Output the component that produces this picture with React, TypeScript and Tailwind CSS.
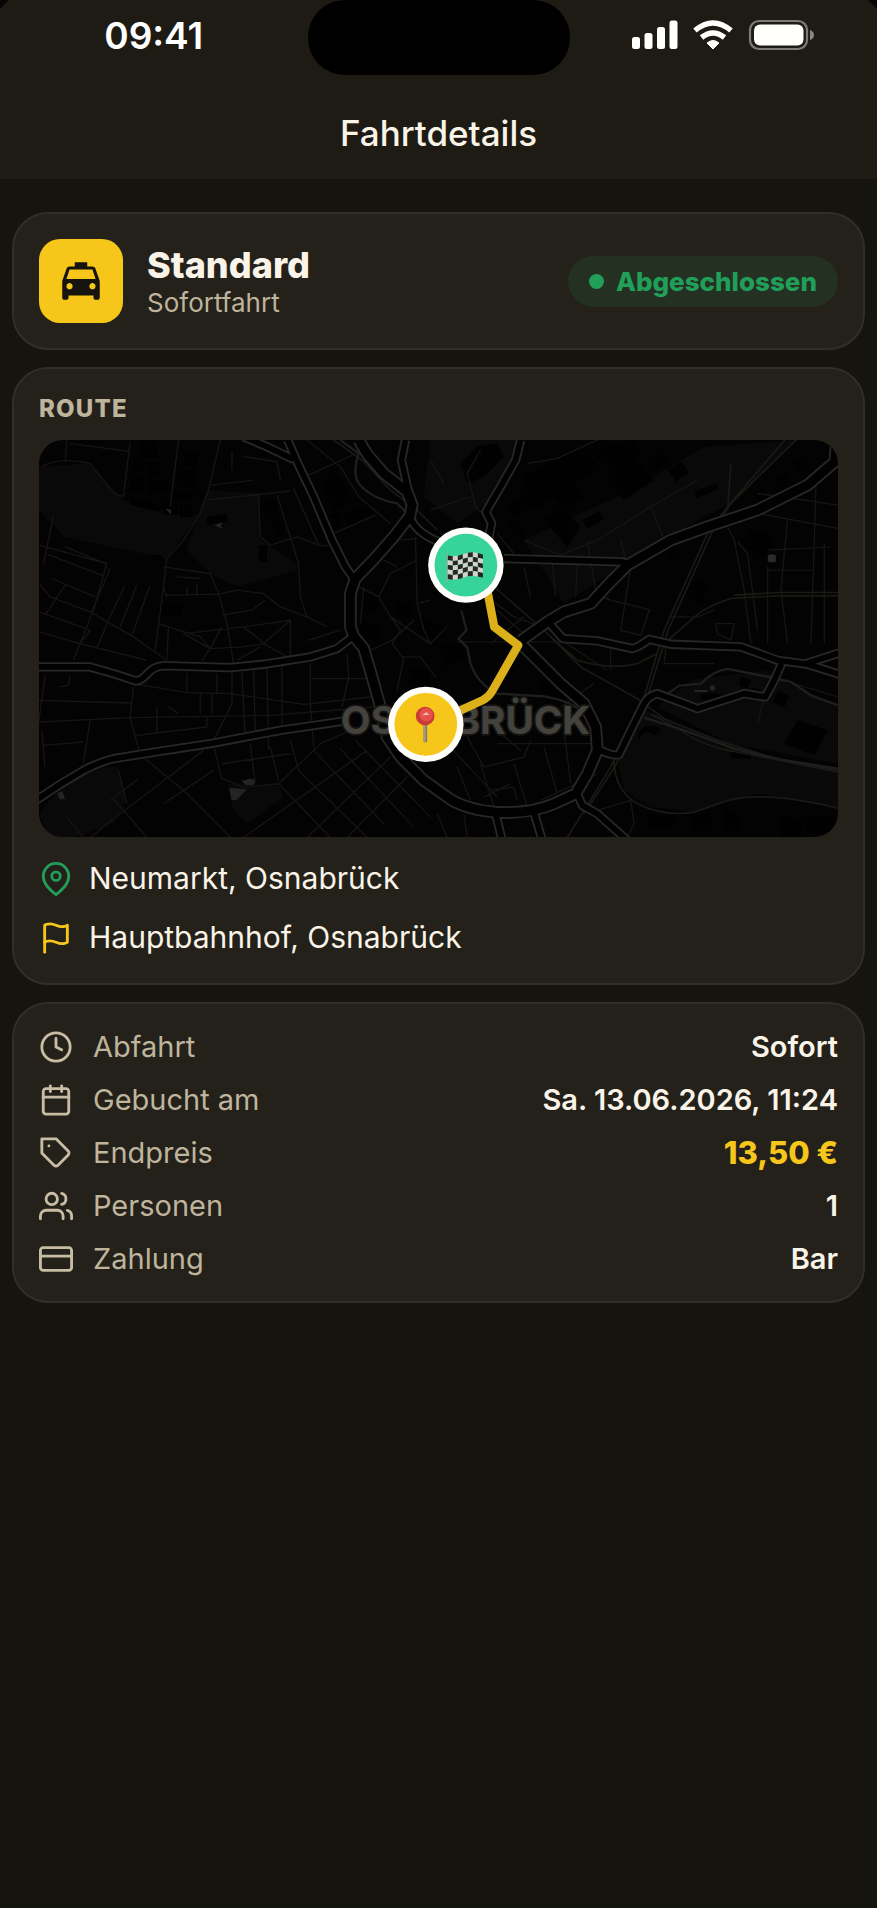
import React from "react";
import { FiCalendar, FiClock, FiCreditCard, FiFlag, FiMapPin, FiTag, FiUsers } from "react-icons/fi";
import { MdLocalTaxi } from "react-icons/md";
import type { IconType } from "react-icons";

interface Detail {
  label: string;
  value: string;
  icon: IconType;
  highlight?: boolean;
}

const details: Detail[] = [
  { label: "Abfahrt", value: "Sofort", icon: FiClock },
  { label: "Gebucht am", value: "Sa. 13.06.2026, 11:24", icon: FiCalendar },
  { label: "Endpreis", value: "13,50 €", icon: FiTag, highlight: true },
  { label: "Personen", value: "1", icon: FiUsers },
  { label: "Zahlung", value: "Bar", icon: FiCreditCard },
];

// Roads with a casing, drawn in two passes so that junctions stay open
const mainRoads = [
  "M985 30L1010 72L1060 130L1130 185L1145 225L1138 258L1090 320L1030 388L975 445L960 490V590L970 618L1000 655L1025 740L1050 830L1070 920L1110 980L1180 1050L1260 1107Q1310 1138 1400 1146Q1500 1150 1570 1120L1635 1090L1670 1030L1700 960L1695 890L1660 820L1590 760L1530 700L1470 640",
  "M2415 50L2412 95L2330 165L2180 240L2030 290L1920 330L1790 405L1735 460L1680 520L1600 545L1550 575L1470 632",
];

const secondaryRoads = [
  "M772 30L800 95L850 200L905 330L945 410L972 448",
  "M640 20L710 50L790 88",
  "M1125 30L1113 90L1135 190",
  "M1140 265Q1160 310 1225 335",
  "M20 710H180L250 730L318 752Q335 750 350 732Q370 708 400 706L600 712L700 702L840 680L920 655L968 618",
  "M20 1108L90 1062L160 1020Q210 994 250 985L330 972L550 938L750 900L940 872",
  "M1470 30L1455 90L1410 170L1366 245L1383 280L1375 320",
  "M1420 385L1775 395L1800 405",
  "M1555 578L1597 625L1700 632L1805 655Q1825 650 1855 627L1920 642L2130 650L2240 690L2330 702L2425 732",
  "M2320 702L2425 668",
  "M2252 700L2230 750L2203 800L2140 790L2000 835L1935 810L1880 790Q1855 795 1840 820L1800 900L1765 972Q1750 980 1700 955",
  "M1640 1090L1655 1125L1700 1150L1790 1230",
  "M1395 1150L1415 1230",
  "M1510 1145L1535 1230",
];

const streets = [
  "M35 110Q90 80 180 100L250 190L280 200L300 35M110 30L106 95M120 40L300 65M445 30L420 230",
  "M570 30L535 180L510 250L460 330L410 385L400 470L375 660M605 65V120M640 80L740 95L750 150M540 165L670 150M530 210L780 183M740 195L805 400L810 500L830 560L890 590",
  "M790 175L865 345L895 348M685 195L690 320L720 345L800 320L865 345M835 135L1000 60M910 310L1035 255M830 30L930 110L985 200L1080 280",
  "M27 345L230 400L190 540L130 690M70 260L40 400M105 350L225 400M45 370L220 437M65 445L195 500M27 460L60 500L180 545L310 620L410 690M105 465L45 555M240 415L185 545M285 465L235 570M320 465L270 590M360 465L305 615M27 545L180 600L150 640M27 605L150 640L350 690M235 570L200 655",
  "M400 410L540 430L565 490L590 580L610 700M405 495L565 492L620 480L700 490L750 530L830 560M410 500L400 470M440 440L510 445M470 470V495M500 460V495M575 555L665 540L705 510M385 580L510 620L540 655L515 690M415 590L410 690M540 655L460 610L640 590L780 570M540 655L640 650L700 640L790 690M640 590L690 630L700 640L780 570V690M620 690L690 650M575 590L540 655M835 630L930 600",
  "M310 770L300 865L330 970M45 735L27 870M27 810L305 818M27 875L300 862L720 855L1030 830M310 760L470 787L600 790L820 822L1020 800M470 730V787M510 790V850M545 790V850M560 730V790M605 725V820L550 930M635 725L645 930M670 720L675 900M710 715L715 960M755 710V890M840 700V820L850 950M845 745H1010M415 830L445 850M380 830V910M320 915L530 890V860M40 945L160 935M180 870L160 1000M35 900L45 1010",
  "M120 735L115 765L90 770M345 985L460 1080L540 1160L600 1220M550 945L575 1045L640 1070L745 1060L870 940L960 900M660 940L675 1060M575 1000L780 970M720 950L745 1050M780 930L805 1020M850 960L1060 1180M930 955L1150 1190M975 930L1200 1160M745 1060L900 1221M1080 980L830 1221M1010 960L640 1221M1130 1040L950 1221M805 1020L1010 1221M265 1020L290 1120M520 960L270 1150L180 1221M325 1045L240 1110M550 1020L400 1120M110 1160L160 1221M250 1105L350 1221",
  "M985 470L1045 500L1080 560L1110 600L1085 640L1115 680L1170 680L1215 740M1045 500L1080 430L1160 390M1060 390L1100 410M1155 320L1160 520L1180 600L1200 640L1080 560M1160 520L1200 510M1020 660L1085 630L1150 570M1120 680L1100 780M1000 470L990 580M1200 640L1250 590",
  "M950 670L955 740L935 830M1110 330L1160 325",
  "M1490 100L1580 85L1700 30M1350 60L1310 130L1335 230L1355 250M1400 310L1450 370M1480 330L1590 375L1700 330L1860 230L2000 150M1860 230L1900 330M1670 335L1695 480L1740 510M1480 410L1500 500M1565 400L1575 500M1640 400L1635 500M1770 330L1785 390M1800 410L1770 600L1830 615L1855 540M1785 520L1860 540M1700 500L1780 520",
  "M2090 290L2110 330L2140 480L2160 640M2270 265L2250 480L2270 640M2355 170L2340 640M2180 190L2421 225M2180 250L2421 295M2120 335L2150 370L2180 600M2210 420L2340 420M2210 360L2400 350M2210 410V640M2380 340V640M1920 560L2000 560L2050 540M2055 580H2110L2100 630L2060 610Z",
  "M1370 500L1450 560L1560 600M1280 635H1600L1730 720M1400 540L1490 620M1740 650L1740 720M1690 760L1590 830M1480 560L1380 640M1905 650L1900 700L2050 700M1910 330L2010 290",
  "M1240 930L1400 1100M1300 900L1360 1010L1480 980L1500 930M1470 960L1400 900M1450 1000L1490 1130M1350 1000L1390 1130M1280 1010L1320 1110M1400 940L1680 940M1600 900L1620 1060M1540 950L1580 1090M1360 1100L1440 1060M1530 1110L1700 1030M1220 1150L1250 1221M1300 1150L1310 1221M1370 1080L1450 1070L1460 1110",
  "M1700 1140L1800 1110L1810 1180L1790 1221M2180 880L2200 800M2290 760L2421 800M1320 200L1200 240M1200 90L1240 160",
];

const railways = [
  "M2270 20L2090 230L2030 310L1900 600L1840 800L1740 1010L1610 1221",
  "M2300 25L2100 220L2042 310L1912 600L1850 800L1752 1010L1660 1150",
  "M2100 100L2090 240",
  "M2421 497H2240L2100 505Q2020 530 1980 570L1900 640",
  "M2421 487H2240L2110 495",
  "M1380 460L1540 600L1650 710L1820 805L1900 865L2060 930L2250 990L2421 1020",
  "M1550 610L1640 690Q1740 720 1820 700L1880 670",
  "M1860 850L1950 900Q2020 950 2120 965L2421 1025",
  "M1750 985Q1750 1080 1820 1120Q1900 1160 1990 1145L2090 1110Q2200 1080 2421 1133",
  "M910 30L1000 95L1080 180L1160 240L1220 300",
];

const waterways = [
  "M1292 540L1308 600L1284 625L1310 652L1320 700Q1340 760 1400 790L1540 798Q1620 810 1660 850",
  "M1905 795L1945 766L2010 760Q2050 720 2090 716L2190 735L2280 755L2340 795L2421 825",
  "M1840 862L1960 900L2110 955L2250 988L2421 1015",
  "M930 30L985 70Q965 130 985 160Q1020 205 1100 220L1125 245",
];

const greens = [
  "M27 110L180 100L280 210L480 260L510 250L410 385L240 350L100 320L27 240Z",
  "M530 180L690 190V330L800 400L800 420L620 470L540 430L470 360L500 260Z",
  "M185 1010L265 1010L290 1110L250 1180L130 1221H60L27 1150L100 1060Z",
  "M590 1060L745 1065L760 1100L650 1180L610 1140Z",
  "M1200 30H1460L1440 110L1370 220L1280 280L1180 200Z",
  "M1760 985L1820 830L1990 900L2200 970L2421 1020V1130L2180 1090L1990 1145L1860 1130L1780 1080Z",
  "M2020 50L2300 30L2100 220L1930 310L1600 520L1480 330L1800 180Z",
  "M1980 750L2200 720L2421 830V1000L2100 940L1880 830Z",
];

const buildings = [
  "M335 35h45v45h-45zM310 85h30v40h-30zM350 100h35v40h-35zM300 145h40v40h-40zM350 150h60v40h-60zM460 65h40v45h-40zM440 120h50v50h-50zM430 180h60v25h-60zM300 205l90 20v20l-90-20zM400 215h40v40h-40zM450 225h35v35h-35z",
  "M530 260l60-10v25l-60 10zM690 210h50v40h-50zM720 260l20-10 20 60-20 10zM685 345h25v50h-25zM395 525h60v30h-60zM365 375h30v15h-30z",
  "M880 165l40-30 50 70-60 40zM890 260l30-10 15 40-30 10zM940 250l70-30 15 30-70 40z",
  "M1480 140l170-90 60 60-200 130zM1570 200l60-40 30 40-60 40zM1680 60l130-30 20 40-80 60zM1540 270l50-40 60 60-40 60zM1430 220l60-30 30 30-70 40zM1720 150l90-60 60 60-90 60zM1910 120l40-25 25 35-40 25zM1655 270l50-25 15 20-50 30zM1990 185l65-25 8 15-65 30zM1850 90l40-20 20 30-30 20z",
  "M1290 100l50-50 60-10 20 40-60 60-50 20zM1420 270h30l40 40-20 20zM1970 490l30-45 35 20-30 60zM1915 370h30v20h-30zM2150 300l60 0 20 40-30 40-60-30z",
  "M1820 920a40 40 0 0 1 70-20l-20 15a25 25 0 0 0-40 30zM2130 740l30 10-10 25-25-8zM2165 770l25 8-10 25-25-8zM2240 780l35 15-15 35-35-15zM2300 870l90 30-40 75-90-35zM2010 790h60v20h-60zM2100 960l60 10v15h-60z",
  "M2230 150l30-20 20 30-30 20zM2170 190l30-15 15 30-30 15zM2290 100l30-20 15 30-30 20zM1980 1150h60v50h-60zM2080 1140l50 20v40h-50zM2250 1150l60 20v50h-60zM2330 1160h80v50h-80zM1850 1150l80 10v30h-80z",
  "M1000 490h40v50h-40zM990 580h50v50h-50zM1100 520h40v35h-40zM1180 560l50 30-20 40-50-20zM1230 650l60-20 20 50-70 30zM1140 720h60v40h-60zM1320 800l70 20-10 40-60-10zM1550 740l60 50-30 30-60-50z",
];

const flagCells = Array.from({ length: 35 }, (_, i) => ({ col: i % 7, row: Math.floor(i / 7) }));

function CheckeredFlag() {
  return (
    <g>
      <path d="M1251 370V456" stroke="#a8a79f" strokeWidth="4" />
      {flagCells.map(({ col, row }) => {
        const x = 1252 + col * 15;
        const wave = (n: number) => 374 - Math.sin((n / 7) * Math.PI * 2 + 3.6) * 5 - n * 0.5;
        const left = wave(col) + row * 14;
        const right = wave(col + 1) + row * 14;
        return (
          <path
            key={`${col}-${row}`}
            d={`M${x} ${left}L${x + 15} ${right}V${right + 14}L${x} ${left + 14}Z`}
            fill={(col + row) % 2 ? "#d6d2c8" : "#262522"}
          />
        );
      })}
    </g>
  );
}

function RouteMap() {
  return (
    <svg
      viewBox="27 30 2394 1191"
      className="block h-auto w-full rounded-3xl bg-[#030303]"
      role="img"
      aria-label="Karte"
      fill="none"
      strokeLinejoin="round"
    >
      <path d={greens.join("")} fill="#090909" />
      <path d={buildings.join("")} fill="#010101" />
      <path d={streets.join("")} stroke="#161513" strokeWidth="4" />
      <path d={railways.join("")} stroke="#1b1914" strokeWidth="5" />
      <path d={waterways.join("")} stroke="#1e1e1e" strokeWidth="7" />
      <path d="M405 235l18 5v15zM552 285l25-8-5 10 5 10zM597 1072l52 5-30 32h-15zM635 1052l25-8 15 5-5 15h-25zM82 1088l15-5 8 22-15 2z" fill="#242424" />
      <rect x="2211" y="373" width="24" height="23" rx="5" fill="#2a2a2a" />
      <path d="M1990 782h40" stroke="#242424" strokeWidth="6" />
      <circle cx="2045" cy="773" r="8" fill="#242424" />

      <path d={mainRoads.join("")} stroke="#272726" strokeWidth="38" />
      <path d={secondaryRoads.join("")} stroke="#272726" strokeWidth="28" />
      <path d={mainRoads.join("")} stroke="#010101" strokeWidth="27" />
      <path d={secondaryRoads.join("")} stroke="#010101" strokeWidth="17" />

      <text
        x="1305"
        y="912"
        textAnchor="middle"
        fontFamily="Inter, sans-serif"
        fontWeight="700"
        fontSize="116"
        fill="#44423d"
        stroke="#151513"
        strokeWidth="10"
        paintOrder="stroke"
      >
        OSNABRÜCK
      </text>

      <path d="M1371 485L1391 590L1463 645L1385 782Q1375 800 1356 810L1290 840" stroke="#dbb01a" strokeWidth="25" />

      <circle cx="1306" cy="405" r="113" fill="#fffefa" />
      <circle cx="1306" cy="405" r="94" fill="#36d39a" />
      <CheckeredFlag />

      <circle cx="1186" cy="882" r="113" fill="#fffefa" />
      <circle cx="1186" cy="882" r="94" fill="#f7c61a" />
      <rect x="1179" y="880" width="11" height="56" rx="3" fill="#857b6c" />
      <path d="M1183 882V934" stroke="#b5aea2" strokeWidth="3" />
      <circle cx="1184" cy="857" r="28" fill="#c93a36" />
      <circle cx="1187" cy="853" r="20" fill="#e8504c" />
      <path d="M1175 855L1188 846L1196 853Z" fill="#f4c9bd" />
    </svg>
  );
}

function StatusBar() {
  return (
    <div className="grid grid-cols-[1fr_262px_1fr] justify-items-center">
      <time className="pt-[14px] text-[37px] leading-[44px] font-semibold text-white">09:41</time>
      <div className="h-[75px] w-full rounded-[37px] bg-black" />
      <svg width="184" height="32" viewBox="0 0 184 32" className="mt-[19px]" fill="#fffffc" aria-hidden="true">
        <rect x="1" y="18" width="8" height="12" rx="2.5" />
        <rect x="13.5" y="14" width="8" height="16" rx="2.5" />
        <rect x="26" y="8" width="8" height="22" rx="2.5" />
        <rect x="38.5" y="1.5" width="8" height="28.5" rx="2.5" />
        <path d="M82 30L76 24Q82 19 88 24Z" strokeLinejoin="round" stroke="#fffffc" strokeWidth="1" />
        <path d="M70.5 18.5Q82 9.5 93.5 18.5M64 11.5Q82 -3.5 100 11.5" fill="none" stroke="#fffffc" strokeWidth="5.5" />
        <rect x="119" y="2" width="57" height="28" rx="9" fill="none" stroke="#7d7b73" strokeWidth="2.2" />
        <rect x="123" y="5.5" width="49.5" height="21" rx="6" />
        <path d="M179 11Q183 12.5 183 16T179 21Z" fill="#8a8880" />
      </svg>
    </div>
  );
}

function Card({ children, className = "" }: { children: React.ReactNode; className?: string }) {
  return (
    <section className={`rounded-[36px] border-2 border-[#312e29] bg-[#24211b] px-[25px] ${className}`}>
      {children}
    </section>
  );
}

export default function App() {
  return (
    <div className="min-h-screen bg-[#15140f] font-[Inter,sans-serif] text-[#f9f4e7]">
      {/* Header */}
      <header className="relative bg-[#1e1b15]">
        <svg width="9" height="9" className="absolute top-0 left-0" aria-hidden="true">
          <path d="M0 0H9L0 9Z" fill="#060606" />
        </svg>
        <svg width="9" height="9" className="absolute top-0 right-0" aria-hidden="true">
          <path d="M0 0H9V9Z" fill="#060606" />
        </svg>
        <StatusBar />
        <h1 className="pt-9 pb-6 text-center text-[35px] leading-[44px] font-medium">Fahrtdetails</h1>
      </header>

      <main className="flex flex-col gap-[17px] px-3 pt-[33px] pb-8">
        {/* Ride type */}
        <Card className="flex items-center py-[25px]">
          <div className="flex size-[84px] shrink-0 items-center justify-center rounded-[21px] bg-[#f7c61a]">
            <MdLocalTaxi size={50} className="text-[#15140f]" />
          </div>
          <div className="ml-6 flex-1 pt-1">
            <h2 className="text-[36px] leading-10 font-extrabold">Standard</h2>
            <p className="text-[26px] leading-9 text-[#bfb49c]">Sofortfahrt</p>
          </div>
          <div className="flex items-center gap-3 rounded-full bg-[#243022] px-[21px] py-2 text-[26px] leading-[35px] font-extrabold text-[#219f59]">
            <span className="size-[15px] rounded-full bg-[#219f59]" />
            Abgeschlossen
          </div>
        </Card>

        {/* Route */}
        <Card className="pt-6 pb-4">
          <h2 className="mb-[15px] text-[24px] leading-8 font-extrabold tracking-wider text-[#bfb49c]">ROUTE</h2>
          <RouteMap />
          <ul className="pt-3 text-[30px] leading-[59px]">
            <li className="flex items-center gap-4">
              <FiMapPin size={34} className="shrink-0 text-[#219f59]" />
              Neumarkt, Osnabrück
            </li>
            <li className="flex items-center gap-4">
              <FiFlag size={34} className="shrink-0 text-[#f7c61a]" />
              Hauptbahnhof, Osnabrück
            </li>
          </ul>
        </Card>

        {/* Ride details */}
        <Card className="py-4">
          <dl className="text-[29px] leading-[53px]">
            {details.map(({ label, value, icon: Icon, highlight }) => (
              <div key={label} className="flex items-center">
                <Icon size={34} className="mr-5 shrink-0 text-[#c8bda4]" />
                <dt className="flex-1 text-[#bfb49c]">{label}</dt>
                <dd className={highlight ? "text-[31px] font-extrabold text-[#f7c61a]" : "font-semibold"}>{value}</dd>
              </div>
            ))}
          </dl>
        </Card>
      </main>
    </div>
  );
}
